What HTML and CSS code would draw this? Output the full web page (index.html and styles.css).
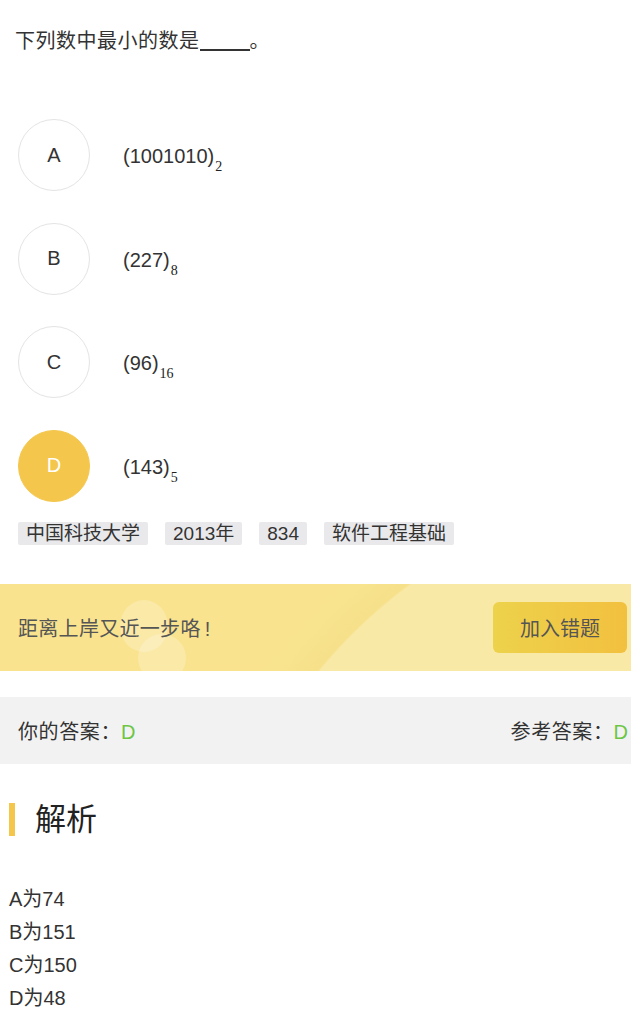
FILE: index.html
```html
<!DOCTYPE html>
<html lang="zh-CN">
  <head>
    <meta charset="UTF-8" />
    <meta name="viewport" content="width=device-width, initial-scale=1.0" />
    <title>题目解析</title>
    <link rel="stylesheet" href="styles.css">
  </head>
  <body>
    <!-- 题干 -->
    <div class="question">下列数中最小的数是<span class="blank"></span>。</div>

    <!-- 选项 -->
    <div class="options">
      <div class="option">
        <div class="letter">A</div>
        <div class="value">(1001010)<sub>2</sub></div>
      </div>
      <div class="option">
        <div class="letter">B</div>
        <div class="value">(227)<sub>8</sub></div>
      </div>
      <div class="option">
        <div class="letter">C</div>
        <div class="value">(96)<sub>16</sub></div>
      </div>
      <div class="option">
        <div class="letter active">D</div>
        <div class="value">(143)<sub>5</sub></div>
      </div>
    </div>

    <div class="tags">
      <span class="tag">中国科技大学</span>
      <span class="tag">2013年</span>
      <span class="tag">834</span>
      <span class="tag">软件工程基础</span>
    </div>

    <!-- 加入错题 -->
    <div class="banner">
      <span class="bubble one"></span>
      <span class="bubble two"></span>
      <div class="banner-text">距离上岸又近一步咯<span class="bang">!</span></div>
      <button class="add-btn">加入错题</button>
    </div>

    <div class="answer-bar">
      <div>你的答案：<span class="right">D</span></div>
      <div>参考答案：<span class="right">D</span></div>
    </div>

    <!-- 解析 -->
    <div class="analysis">
      <h2>解析</h2>
      <div class="analysis-body">
        A为74<br>
        B为151<br>
        C为150<br>
        D为48
      </div>
    </div>
  </body>
</html>
```

FILE: styles.css
```css
* {
  margin: 0;
  padding: 0;
  box-sizing: border-box;
}

body {
  font-family: "Liberation Sans", "Noto Sans CJK SC", sans-serif;
  font-size: 20px;
  color: #333;
  background: #fff;
  width: 631px;
  overflow: hidden;
}

.question {
  padding: 27px 15px 0;
  line-height: 28px;
  letter-spacing: 0.5px;
  color: #333;
}

.blank {
  display: inline-block;
  width: 50px;
  border-bottom: 2px solid #333;
  vertical-align: -3px;
  height: 18px;
}

.options {
  display: flex;
  flex-direction: column;
  gap: 31.5px;
  padding: 64px 18px 0;
}

.option {
  display: flex;
  align-items: center;
  height: 72px;
}

.letter {
  width: 72px;
  height: 72px;
  border-radius: 50%;
  border: 1px solid #e4e4e4;
  display: flex;
  align-items: center;
  justify-content: center;
  font-size: 20px;
  color: #333;
}

.letter.active {
  background: #f4c64b;
  border-color: #f4c64b;
  color: #fff;
}

.value {
  margin-left: 33px;
  font-size: 20px;
  line-height: 24px;
  padding-top: 2px;
}

.value sub {
  font-family: "Liberation Serif", serif;
  font-size: 14px;
  color: #222;
  vertical-align: -8px;
  line-height: 0;
  margin-left: 1px;
}

.tags {
  display: flex;
  gap: 17px;
  padding: 20px 18px 0;
}

.tag {
  background: #e9e9eb;
  border-radius: 2px;
  font-size: 19px;
  line-height: 23px;
  height: 23px;
  padding: 0 8px;
  color: #333;
}

.banner {
  position: relative;
  overflow: hidden;
  margin-top: 39px;
  height: 87px;
  display: flex;
  align-items: center;
  justify-content: space-between;
  padding: 0 4px 0 18px;
  background:
    radial-gradient(circle at 712px 410px, #f9e9a6 508px, #f6e08a 510px, #f8e38e 540px, transparent 560px),
    #f9e38f;
}

.bubble {
  position: absolute;
  border-radius: 50%;
  background: rgba(255, 255, 255, 0.22);
}

.bubble.one {
  left: 120px;
  top: 16px;
  width: 48px;
  height: 52px;
}

.bubble.two {
  left: 138px;
  top: 50px;
  width: 48px;
  height: 48px;
}

.banner-text {
  position: relative;
  font-size: 20px;
  letter-spacing: 0.3px;
  color: #555;
}

.bang {
  margin-left: 4px;
}

.add-btn {
  position: relative;
  width: 134px;
  height: 51px;
  border: none;
  border-radius: 6px;
  background: linear-gradient(to right, #edd24c, #f2c03f);
  font-family: inherit;
  font-size: 20px;
  color: #555;
  cursor: pointer;
}

.answer-bar {
  margin-top: 26px;
  height: 67px;
  background: #f2f2f2;
  display: flex;
  align-items: center;
  justify-content: space-between;
  padding: 0 3px 0 18px;
  font-size: 20px;
  letter-spacing: 0.6px;
  color: #333;
}

.right {
  color: #6cc644;
  letter-spacing: 0;
}

.analysis {
  padding: 39px 9px 0;
}

.analysis h2 {
  font-weight: normal;
  font-size: 31px;
  line-height: 33px;
  height: 33px;
  color: #222;
  border-left: 6px solid #f4c64b;
  padding-left: 20px;
}

.analysis-body {
  margin-top: 47px;
  line-height: 33px;
  font-size: 20px;
  color: #333;
}
```
